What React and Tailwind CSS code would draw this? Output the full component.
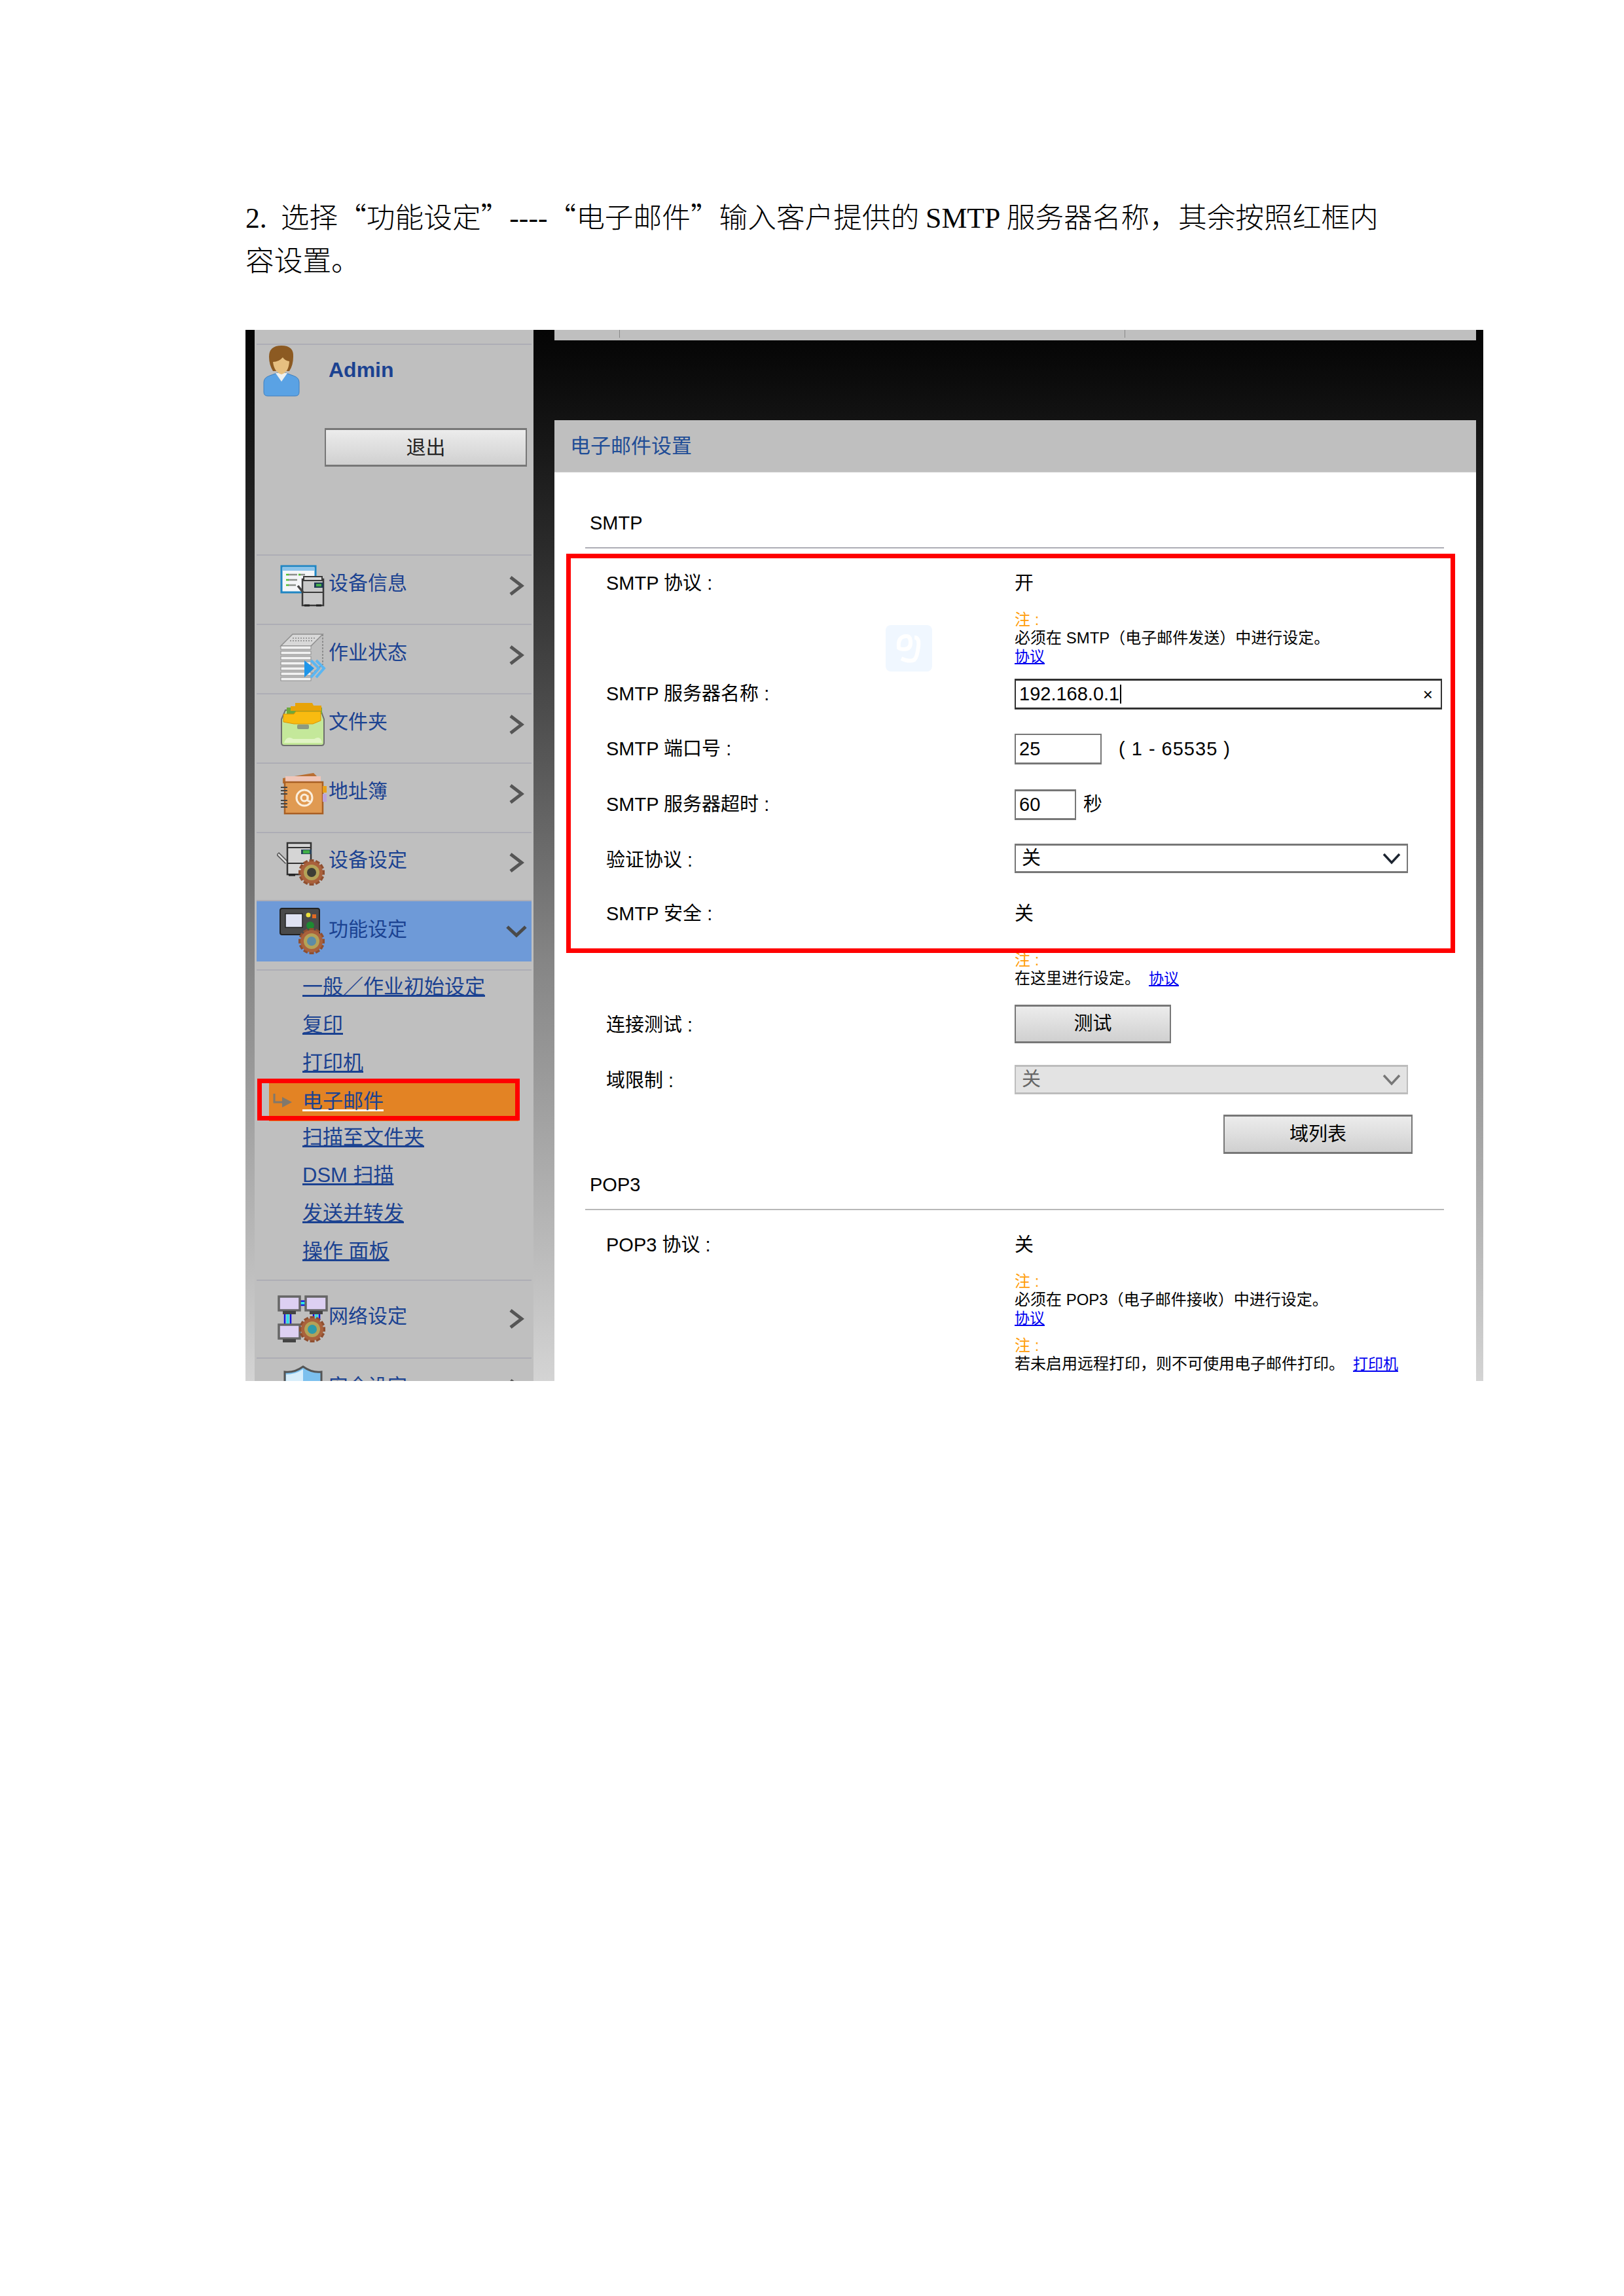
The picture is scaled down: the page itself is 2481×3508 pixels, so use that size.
import React from "react";

const NAV_TEXT = "text-[30px] leading-none text-[#1b4291]";
const NOTE = "text-[24px] leading-[28px]";

function Gear({ x, y, r = 19, hub = "#5f6a5a" }) {
  const teeth = [0, 30, 60, 90, 120, 150, 180, 210, 240, 270, 300, 330];
  return (
    <g transform={`translate(${x} ${y})`}>
      {teeth.map((a) => (
        <rect key={a} x={-3.5} y={-r} width={7} height={7} fill="#8f4f30" transform={`rotate(${a})`} />
      ))}
      <circle r={r - 3} fill="#a9613c" />
      <circle r={r - 8} fill="#b4a258" />
      <circle r={r - 13} fill={hub} />
    </g>
  );
}

function DeviceInfoIcon() {
  return (
    <svg width="80" height="80" viewBox="0 0 80 80">
      <rect x="7" y="8" width="52" height="40" fill="#f4f6f8" stroke="#1f86c4" strokeWidth="3" />
      <rect x="9" y="10" width="48" height="5" fill="#8cc4ea" />
      <path d="M17 21h14M33 21h10M17 29h14M17 37h12" stroke="#8a8f8a" strokeWidth="2.5" />
      <path d="M14 21h4M33 21h3M14 29h4M14 37h4" stroke="#4fc12e" strokeWidth="2.5" />
      <rect x="39" y="28" width="32" height="40" fill="#c9c9c9" stroke="#3a3a3a" strokeWidth="2.5" />
      <rect x="41" y="24" width="28" height="6" fill="#d8d8d8" stroke="#3a3a3a" strokeWidth="2" />
      <path d="M39 48h32" stroke="#3a3a3a" strokeWidth="2" />
      <rect x="57" y="33" width="14" height="8" fill="#1f3a55" />
      <rect x="60" y="35" width="8" height="4" fill="#45b04a" />
      <path d="M32 38l8 10" stroke="#444" strokeWidth="3.5" />
      <path d="M42 68h8M60 68h8" stroke="#222" strokeWidth="3" />
    </svg>
  );
}

function JobStatusIcon() {
  const sheets = [10, 18, 26, 34, 42, 50, 58];
  return (
    <svg width="80" height="80" viewBox="0 0 80 80">
      <path d="M6 24L24 6h46L52 24z" fill="#d8d8d8" stroke="#8e8e8e" strokeWidth="1.5" />
      <path d="M24 12h36M20 16h36" stroke="#9b9b9b" strokeWidth="2" strokeDasharray="2 2" />
      <path d="M70 6v46L52 68" fill="none" stroke="#8e8e8e" strokeWidth="2" strokeDasharray="3 2" />
      {sheets.map((y) => (
        <rect key={y} x="6" y={y + 14} width="46" height="5" fill="#f2f2f2" stroke="#8e8e8e" strokeWidth="1" />
      ))}
      <path d="M42 46l15 12-15 14z" fill="#1f96ea" />
      <path d="M52 46l12 12-12 14M60 46l12 12-12 14" fill="none" stroke="#5bb6f2" strokeWidth="4" />
    </svg>
  );
}

function FolderIcon() {
  return (
    <svg width="80" height="80" viewBox="0 0 80 80">
      <path d="M7 30l6-14h54l5 14v36q0 4-4 4H11q-4 0-4-4z" fill="#c4e89a" stroke="#6e6e6e" strokeWidth="2" />
      <rect x="15" y="12" width="54" height="10" fill="#6fa83a" />
      <path d="M28 5h26l2 4h12v8H21V10h7z" fill="#e8a308" />
      <path d="M10 22h16l3-4h38v14l-12 5H26l-16-3z" fill="#f9bb10" stroke="#d89406" strokeWidth="1" />
      <rect x="31" y="38" width="18" height="7" rx="2" fill="#8d9a80" />
      <path d="M11 66q4-12 14-6h32q10-6 12 6z" fill="#e9f6cf" opacity="0.8" />
    </svg>
  );
}

function AddressBookIcon() {
  return (
    <svg width="80" height="80" viewBox="0 0 80 80">
      <path d="M9 14L56 6l8 8v8H9z" fill="#b96f33" />
      <rect x="13" y="11" width="54" height="10" fill="#f0c6b8" />
      <rect x="12" y="20" width="58" height="48" fill="#e09a52" stroke="#a85f24" strokeWidth="2.5" />
      <rect x="70" y="26" width="6" height="10" fill="#e8a11a" />
      <rect x="70" y="38" width="6" height="12" fill="#bca4dc" />
      <path d="M6 28h10M6 33h10M6 38h10M6 48h10M6 53h10M6 58h10" stroke="#444" strokeWidth="2" />
      <circle cx="42" cy="44" r="12" fill="none" stroke="#fbeedc" strokeWidth="3" />
      <circle cx="42" cy="44" r="5" fill="none" stroke="#fbeedc" strokeWidth="3" />
      <path d="M47 40v7q0 3 4 2" fill="none" stroke="#fbeedc" strokeWidth="3" />
    </svg>
  );
}

function DeviceSettingsIcon() {
  return (
    <svg width="80" height="80" viewBox="0 0 80 80">
      <path d="M1 24l14 14" stroke="#555" strokeWidth="6" />
      <path d="M2 25l13 13" stroke="#ddd" strokeWidth="2.5" />
      <rect x="16" y="8" width="36" height="48" fill="#d5d5d5" stroke="#333" strokeWidth="2.5" />
      <path d="M16 15h36M16 39h36" stroke="#333" strokeWidth="2" />
      <rect x="37" y="18" width="16" height="7" fill="#28465c" />
      <rect x="40" y="19" width="10" height="5" fill="#3fae46" />
      <path d="M18 57h10M40 57h10" stroke="#222" strokeWidth="3" />
      <Gear x={53} y={53} r={20} hub="#3d3d35" />
    </svg>
  );
}

function FunctionIcon() {
  return (
    <svg width="80" height="80" viewBox="0 0 80 80">
      <rect x="5" y="2" width="60" height="40" rx="3" fill="#4a4a4a" stroke="#222" strokeWidth="2" />
      <rect x="13" y="10" width="26" height="21" fill="#dfe2f2" stroke="#222" strokeWidth="1.5" />
      <circle cx="48" cy="12" r="3.5" fill="#ede03c" />
      <rect x="54" y="11" width="6" height="6" fill="#e06a24" />
      <circle cx="51" cy="28" r="6" fill="#1e8a32" />
      <Gear x={53} y={52} r={20} hub="#5c8ca6" />
    </svg>
  );
}

function NetworkIcon() {
  const pc = (x, y) => (
    <g key={`${x}-${y}`}>
      <rect x={x} y={y} width="32" height="21" fill="#ddd0f2" stroke="#666" strokeWidth="3.5" />
      <rect x={x + 6} y={y + 22} width="20" height="5" fill="#444" />
    </g>
  );
  return (
    <svg width="80" height="80" viewBox="0 0 80 80">
      <path d="M35 11h12M35 17h12M12 30v18M21 30v18M56 30v10M65 30v10" stroke="#1414e0" strokeWidth="2.5" />
      <path d="M35 14h12M16.5 30v18M60.5 30v10" stroke="#2fe0ea" strokeWidth="4" />
      {[pc(3, 4), pc(44, 4), pc(3, 47)]}
      <Gear x={54} y={54} r={20} hub="#2f9aa8" />
    </svg>
  );
}

function ShieldIcon() {
  return (
    <svg width="80" height="80" viewBox="0 0 80 80">
      <path d="M12 12q14 2 28-8 14 10 28 8v40q0 14-28 24-28-10-28-24z" fill="#7cc0ee" stroke="#555" strokeWidth="3" />
      <path d="M40 8v68q-26-10-26-24V16q14 0 26-8z" fill="#d8eefb" />
    </svg>
  );
}

function ChevronRight() {
  return (
    <svg className="shrink-0" width="24" height="30" viewBox="0 0 24 30">
      <path d="M3 2l17 13L3 28" fill="none" stroke="#555" strokeWidth="5" />
    </svg>
  );
}

function NavRow({ icon, label, rowClass = "h-[106px] pb-[20px]" }) {
  return (
    <div className={`mx-[3px] flex items-center border-b-2 border-[#adadb5] pl-[31px] pr-[11px] ${rowClass}`}>
      <div className="mt-[12px] h-[80px] w-[79px] shrink-0">{icon}</div>
      <span className={NAV_TEXT}>{label}</span>
      <div className="ml-auto mt-[8px]">
        <ChevronRight />
      </div>
    </div>
  );
}

function SubLink({ children }) {
  return (
    <div className="mb-[14px] flex h-[44px] items-center pl-[70px]">
      <span className="text-[31px] leading-none text-[#1b4291] underline underline-offset-2">{children}</span>
    </div>
  );
}

function FormRow({ label, labelClass = "", className, children }) {
  return (
    <div className={`flex items-center ${className}`}>
      <div className={`w-[703px] shrink-0 pl-[79px] whitespace-nowrap ${labelClass}`}>{label}</div>
      <div className="flex min-w-0 flex-1 items-center">{children}</div>
    </div>
  );
}

function Note({ className, children }) {
  return <div className={`ml-[703px] ${NOTE} ${className}`}>{children}</div>;
}

function Zhu() {
  return <div className="text-[#ff9d0a]">注 :</div>;
}

function ProtoLink({ children = "协议" }) {
  return <span className="text-[23px] text-[#0000f0] underline">{children}</span>;
}

function Select({ disabled }) {
  return (
    <div
      className={`flex h-[45px] w-[601px] items-center justify-between border-2 border-t-[3px] border-b-[3px] pl-[9px] pr-[9px] ${
        disabled ? "border-[#bdbdbd] bg-[#e3e3e3] text-[#666]" : "border-[#777] bg-white"
      }`}
    >
      <span>关</span>
      <svg width="28" height="18" viewBox="0 0 28 18">
        <path d="M2 2l12 13L26 2" fill="none" stroke={disabled ? "#777" : "#1c2430"} strokeWidth="3.5" />
      </svg>
    </div>
  );
}

function GreyButton({ className, children }) {
  return (
    <div className={`flex items-center justify-center border-2 border-t-[3px] border-b-[3px] border-[#777] bg-gradient-to-b from-[#ececec] to-[#d0d0d0] ${className}`}>
      {children}
    </div>
  );
}

function Sidebar() {
  return (
    <aside className="relative h-full w-[426px] shrink-0 overflow-hidden bg-[#bfbfbf]">
      <div className="mx-[3px] h-[23px] border-b-2 border-[#adadb5]" />

      <div className="flex h-[127px] pl-[12px]">
        <svg className="shrink-0" width="60" height="80" viewBox="0 0 60 80">
          <path d="M2 72V57q0-7 9-10l11-4h14l11 4q9 3 9 10v15q0 6-6 6H8q-6 0-6-6z" fill="#5aa2e4" stroke="#3f7fbe" strokeWidth="1" />
          <path d="M20 43l9 13 9-13z" fill="#eef0ee" />
          <path d="M10 18Q10 1 29 1q19 0 18 17 0 13-6 22H16Q10 30 10 18z" fill="#8c5a22" />
          <path d="M16 26q9 0 15-7 3 5 10 6-1 17-12 20-11-3-13-19z" fill="#e6bf80" />
        </svg>
        <span className="ml-[41px] mt-[22px] font-bold text-[32px] leading-none text-[#1b4291]">Admin</span>
      </div>

      <div className="pl-[107px]">
        <GreyButton className="h-[59px] w-[309px] text-[30px] text-[#222]">退出</GreyButton>
      </div>

      <div className="mx-[3px] mt-[134px] h-[2px] bg-[#adadb5]" />

      <NavRow icon={<DeviceInfoIcon />} label="设备信息" />
      <NavRow icon={<JobStatusIcon />} label="作业状态" />
      <NavRow icon={<FolderIcon />} label="文件夹" />
      <NavRow icon={<AddressBookIcon />} label="地址簿" />
      <NavRow icon={<DeviceSettingsIcon />} label="设备设定" rowClass="h-[104px] pb-[20px] border-b-0" />

      <div className="mx-[3px] flex h-[92px] items-center bg-[#6e9ad8] pb-[6px] pl-[31px] pr-[7px]">
        <div className="mt-[12px] h-[80px] w-[79px] shrink-0">
          <FunctionIcon />
        </div>
        <span className={NAV_TEXT}>功能设定</span>
        <svg className="ml-auto mt-[6px]" width="32" height="20" viewBox="0 0 32 20">
          <path d="M2 3l14 13L30 3" fill="none" stroke="#4a4a4a" strokeWidth="5" />
        </svg>
      </div>

      <div className="mx-[3px] mt-[12px] h-[2px] bg-[#adadb5]" />

      <div className="mx-[3px] pt-[2px]">
        <SubLink>一般／作业初始设定</SubLink>
        <SubLink>复印</SubLink>
        <SubLink>打印机</SubLink>
        <div className="-mt-[4px] mb-[2px] ml-[19px] flex h-[58px] w-[381px] items-center gap-[15px] bg-[#e38324] pb-[4px] pl-[6px]">
          <svg className="shrink-0" width="30" height="24" viewBox="0 0 30 24">
            <path d="M2 1v13h16" fill="none" stroke="#80786c" strokeWidth="3" />
            <path d="M14 6l15 8-15 8z" fill="#80786c" />
          </svg>
          <span className="text-[31px] leading-none text-[#1b4291] underline decoration-white underline-offset-2">电子邮件</span>
        </div>
        <SubLink>扫描至文件夹</SubLink>
        <SubLink>DSM 扫描</SubLink>
        <SubLink>发送并转发</SubLink>
        <SubLink>操作 面板</SubLink>
      </div>

      <div className="mx-[3px] mt-[22px] h-[2px] bg-[#adadb5]" />
      <NavRow icon={<NetworkIcon />} label="网络设定" rowClass="h-[119px] pb-[10px]" />
      <NavRow icon={<ShieldIcon />} label="安全设定" />

      {/* red marker over the selected item */}
      <div className="absolute left-[4px] top-[1144px] h-[64px] w-[401px] border-[7px] border-[#ff0000]" />
    </aside>
  );
}

function SettingsPanel() {
  return (
    <main className="relative flex h-full w-[1408px] shrink-0 flex-col overflow-hidden">
      <div className="relative h-[16px] bg-[#bfbfbf]">
        <div className="absolute left-[99px] top-0 h-[12px] w-[1px] bg-[#888]" />
        <div className="absolute left-[871px] top-0 h-[12px] w-[1px] bg-[#888]" />
      </div>
      <div className="h-[122px]" />
      <div className="flex h-[80px] items-center border-b border-[#d8d8d8] bg-[#bfbfbf] pl-[24px] text-[31px] leading-none text-[#1f4d96]">
        电子邮件设置
      </div>

      <div className="flex-1 bg-white text-[29px] leading-none text-black">
        <div className="ml-[47px] mr-[49px] mt-[48px] flex h-[68px] items-center border-b-2 border-[#adadb5] pb-[8px] pl-[7px]">SMTP</div>

        <FormRow label="SMTP 协议 :" className="mt-[18px] h-[70px]">开</FormRow>
        <Note className="mt-[7px]">
          <Zhu />
          <div>必须在 SMTP（电子邮件发送）中进行设定。</div>
          <div><ProtoLink /></div>
        </Note>

        <FormRow label="SMTP 服务器名称 :" className="mt-[20px] h-[47px]">
          <div className="flex h-[47px] w-[653px] items-center justify-between border-2 border-t-[3px] border-b-[3px] border-[#333] pl-[5px] pr-[12px]">
            <span className="border-r-2 border-black pr-[1px]">192.168.0.1</span>
            <span className="text-[26px]">×</span>
          </div>
        </FormRow>

        <FormRow label="SMTP 端口号 :" className="mt-[37px] h-[47px]">
          <div className="flex h-[47px] w-[133px] items-center border-2 border-b-[3px] border-[#777] pl-[5px]">25</div>
          <span className="ml-[26px] tracking-[1px]">( 1 - 65535 )</span>
        </FormRow>

        <FormRow label="SMTP 服务器超时 :" className="mt-[38px] h-[47px]">
          <div className="flex h-[47px] w-[94px] items-center border-2 border-t-[3px] border-b-[3px] border-[#777] pl-[5px]">60</div>
          <span className="ml-[11px]">秒</span>
        </FormRow>

        <FormRow label="验证协议 :" labelClass="pt-[6px]" className="mt-[36px] h-[45px]">
          <Select />
        </FormRow>

        <FormRow label="SMTP 安全 :" className="mt-[32px] h-[60px]">关</FormRow>
        <Note className="mt-[27px]">
          <Zhu />
          <div>
            在这里进行设定。<span className="ml-[13px]"><ProtoLink /></span>
          </div>
        </Note>

        <FormRow label="连接测试 :" labelClass="pt-[4px]" className="mt-[26px] h-[59px]">
          <GreyButton className="h-[59px] w-[239px]">测试</GreyButton>
        </FormRow>

        <FormRow label="域限制 :" labelClass="pt-[4px]" className="mt-[33px] h-[45px]">
          <Select disabled />
        </FormRow>

        <div className="ml-[1022px] mt-[31px]">
          <GreyButton className="h-[60px] w-[289px]">域列表</GreyButton>
        </div>

        <div className="ml-[47px] mr-[49px] mt-[17px] flex h-[69px] items-center border-b-2 border-[#b8b8b8] pb-[7px] pl-[7px]">POP3</div>

        <FormRow label="POP3 协议 :" className="mt-[23px] h-[60px]">关</FormRow>
        <Note className="mt-[12px]">
          <Zhu />
          <div>必须在 POP3（电子邮件接收）中进行设定。</div>
          <div><ProtoLink /></div>
        </Note>
        <Note className="mt-[14px] whitespace-nowrap">
          <Zhu />
          <div>
            若未启用远程打印，则不可使用电子邮件打印。<span className="ml-[13px]"><ProtoLink>打印机</ProtoLink></span>
          </div>
        </Note>
      </div>

      {/* red marker round the SMTP settings */}
      <div className="absolute left-[18px] top-[342px] h-[610px] w-[1358px] border-[7px] border-[#ff0000]" />

      {/* floating translucent widget caught in the screenshot */}
      <div className="absolute left-[506px] top-[451px] flex h-[71px] w-[71px] items-center justify-center rounded-lg bg-[#f0f7ff]">
        <svg width="44" height="54" viewBox="0 0 44 54">
          <path d="M6 26q-2-18 12-18 6 0 6 10t-10 10q-6 0-8-2zM30 10q8 0 6 14-2 16-6 20-8 4-20-2" fill="none" stroke="#ffffff" strokeWidth="6" />
        </svg>
      </div>
    </main>
  );
}

export default function App() {
  return (
    <div
      lang="zh-CN"
      className="h-[3508px] w-[2481px] overflow-hidden bg-white pl-[375px] pt-[296px] font-['Liberation_Sans','Noto_Sans_CJK_SC',sans-serif]"
    >
      <div className="text-[43.7px] font-light text-black font-['Noto_Sans_CJK_SC',sans-serif]">
        <div className="h-[66px] whitespace-nowrap leading-[66px]">
          <span className="font-['Liberation_Serif',serif]">2.</span>
          <span className="ml-[21px]">选择“功能设定”</span>
          <span className="font-['Liberation_Serif',serif]">----</span>
          <span>“电子邮件”输入客户提供的 </span>
          <span className="font-['Liberation_Serif',serif]">SMTP</span>
          <span> 服务器名称，其余按照红框内</span>
        </div>
        <div className="h-[66px] leading-[66px]">容设置。</div>
      </div>

      <div className="mt-[76px] flex h-[1606px] w-[1891px] overflow-hidden bg-gradient-to-b from-[#050505] via-[#858585] via-60% to-[#d4d4d4] pl-[14px]">
        <Sidebar />
        <div className="w-[32px] shrink-0" />
        <SettingsPanel />
      </div>
    </div>
  );
}
